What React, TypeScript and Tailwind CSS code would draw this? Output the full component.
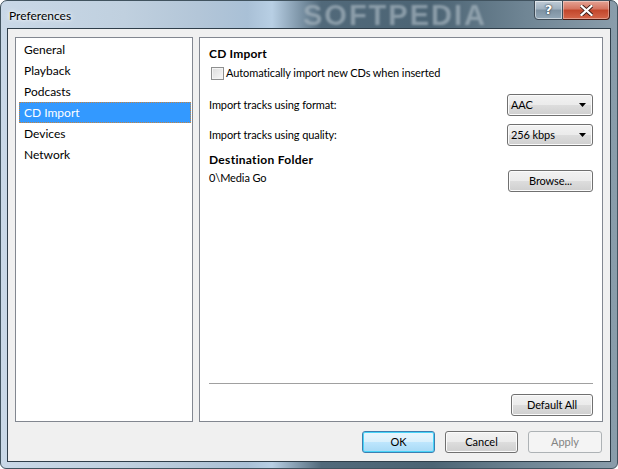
import React from "react";

const btnBase =
  "rounded-[3px] border border-[#707070] bg-[linear-gradient(to_bottom,#f2f2f2_0%,#ebebeb_50%,#dddddd_50%,#cfcfcf_100%)] shadow-[inset_0_0_0_1px_#fbfbfb] flex items-center text-[11px] text-black";

function Select({ value }: { value: string }) {
  return (
    <div className={`${btnBase} h-[22px] w-[86px] justify-between pl-[3px] pr-[6px]`}>
      <span>{value}</span>
      <svg width="7" height="4" viewBox="0 0 7 4">
        <path d="M0 0h7L3.5 4z" fill="#000" />
      </svg>
    </div>
  );
}

function Button({ label, w, className = "" }: { label: string; w: string; className?: string }) {
  return <div className={`${btnBase} h-[22px] justify-center ${w} ${className}`}>{label}</div>;
}

const items = ["General", "Playback", "Podcasts", "CD Import", "Devices", "Network"];

export default function App() {
  return (
    <div className="w-[618px] h-[469px] relative overflow-hidden flex flex-col rounded-t-[7px] rounded-b-[6px] border border-[#41535f] bg-[linear-gradient(to_right,#c9d8e7_0%,#c0d0df_20%,#b3c6d8_32%,#a9c0d6_40%,#b8cfe4_44%,#51697a_52%,#4c6474_70%,#6f8594_85%,#8a9dab_100%)] [font-family:'Lato',sans-serif] text-[12px] text-black">
      {/* title bar */}
      <div className="relative h-[27px] flex items-start justify-between pl-[8px] pr-[7px]">
        <div className="absolute left-[302px] top-[1px] text-[29px] leading-[26px] font-bold tracking-[2px] text-[#a5b4be] opacity-70 blur-[1.2px] [font-family:'Liberation_Sans',sans-serif]">
          SOFTPEDIA
        </div>
        <span className="relative mt-[7px] leading-[16px] text-[12px] text-black [text-shadow:0_0_6px_#ffffff,0_0_3px_#ffffff]">
          Preferences
        </span>
        <div className="relative flex -mt-[1px]">
          <div className="w-[29px] h-[20px] rounded-bl-[4px] border border-[#3d4a55] bg-[linear-gradient(to_bottom,#c0ccd6_0%,#9eb0bf_45%,#7d91a1_50%,#93a8b8_100%)] shadow-[inset_0_0_0_1px_rgba(255,255,255,0.5)] flex items-center justify-center text-white font-bold text-[13px] [text-shadow:0_0_2px_#23303a,0_0_1px_#23303a] [font-family:'DejaVu_Sans',sans-serif]">
            ?
          </div>
          <div className="w-[47px] h-[20px] rounded-br-[4px] border border-l-0 border-[#4a1a12] bg-[linear-gradient(to_bottom,#e5a394_0%,#d4735f_45%,#c2462b_50%,#d5664a_100%)] shadow-[inset_0_0_0_1px_rgba(255,255,255,0.35)] flex items-center justify-center">
            <svg width="13" height="11" viewBox="0 0 13 11">
              <path d="M1.5 1 L11.5 10 M11.5 1 L1.5 10" stroke="#3b1a14" strokeWidth="4" strokeLinecap="square" />
              <path d="M1.5 1 L11.5 10 M11.5 1 L1.5 10" stroke="#ffffff" strokeWidth="2.2" strokeLinecap="square" />
            </svg>
          </div>
        </div>
      </div>

      {/* client area */}
      <div className="mx-[6px] h-[434px] border border-[#2f3e4a] bg-[#f0f0f0] flex flex-col px-[7px] pt-[8px] pb-[8px]">
        <div className="flex gap-[6px] h-[385px]">
          {/* list */}
          <div className="w-[178px] border border-[#828790] bg-white pt-[1px] pl-[3px] pr-[1px]">
            {items.map((it) =>
              it === "CD Import" ? (
                <div
                  key={it}
                  className="h-[21px] flex items-center pl-[4px] bg-[#3399ff] text-white border border-dotted border-[#c4843f]"
                >
                  {it}
                </div>
              ) : (
                <div key={it} className="h-[21px] flex items-center pl-[5px]">
                  {it}
                </div>
              )
            )}
          </div>

          {/* right panel */}
          <div className="flex-1 border border-[#828790] bg-white flex flex-col pl-[9px] pr-[9px] pt-[8px] pb-[5px] text-[11px] tracking-[-0.1px]">
            <div className="font-bold text-[12px] tracking-[0.2px] leading-[16px]">CD Import</div>
            <div className="mt-[3px] h-[16px] flex items-center">
              <div className="ml-[2px] w-[13px] h-[13px] border border-[#8e8f8f] bg-[linear-gradient(135deg,#dcdcdc,#f8f8f8)] shadow-[inset_0_0_0_1px_#f4f4f4]" />
              <span className="ml-[2px]">Automatically import new CDs when inserted</span>
            </div>
            <div className="mt-[13px] h-[22px] flex items-center justify-between">
              <span>Import tracks using format:</span>
              <Select value="AAC" />
            </div>
            <div className="mt-[8px] h-[22px] flex items-center justify-between">
              <span>Import tracks using quality:</span>
              <Select value="256 kbps" />
            </div>
            <div className="mt-[6px] font-bold text-[12px] tracking-[0.3px] leading-[16px]">Destination Folder</div>
            <div className="mt-[2px] flex items-start justify-between">
              <span className="leading-[16px]">0\Media Go</span>
              <Button label="Browse..." w="w-[85px]" />
            </div>
            <div className="mt-auto h-px bg-[#a0a0a0]" />
            <div className="mt-[10px] flex justify-end">
              <Button label="Default All" w="w-[82px]" />
            </div>
          </div>
        </div>

        {/* bottom buttons */}
        <div className="mt-[9px] flex justify-end gap-[10px] pr-[1px] text-[11px]">
          <div className="w-[73px] h-[22px] rounded-[3px] border border-[#3c7fb1] bg-[linear-gradient(to_bottom,#eaf6fd_0%,#d9f0fc_50%,#bee6fd_50%,#a7d9f5_100%)] shadow-[inset_0_0_0_1px_#48d4f8] flex items-center justify-center">
            OK
          </div>
          <Button label="Cancel" w="w-[73px]" />
          <div className="w-[74px] h-[22px] rounded-[3px] border border-[#adb2b5] bg-[#f4f4f4] flex items-center justify-center text-[#838383]">
            Apply
          </div>
        </div>
      </div>
    </div>
  );
}
